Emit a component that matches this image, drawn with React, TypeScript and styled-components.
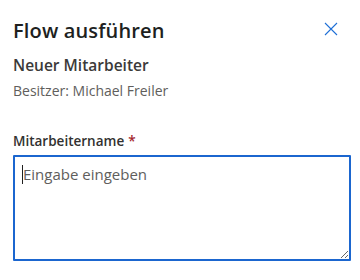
import React from "react";
import styled, { createGlobalStyle } from "styled-components";

const GlobalStyle = createGlobalStyle`
  html, body {
    margin: 0;
    padding: 0;
    background: #ffffff;
  }
  body {
    font-family: "Segoe UI", "Open Sans", "Noto Sans", sans-serif;
    color: #323130;
  }
`;

const Panel = styled.div`
  width: 360px;
  height: 280px;
  box-sizing: border-box;
  padding: 17px 10px 0 13px;
  display: flex;
  flex-direction: column;
  overflow: hidden;
`;

const Header = styled.div`
  display: flex;
  align-items: flex-start;
  justify-content: space-between;
`;

const Title = styled.h1`
  margin: 0;
  font-size: 20px;
  font-weight: 600;
  line-height: 28px;
  color: #201f1e;
  letter-spacing: 0.15px;
`;

const CloseButton = styled.button`
  border: none;
  background: transparent;
  padding: 0;
  margin: 4px 11px 0 0;
  width: 16px;
  height: 16px;
  display: flex;
  align-items: center;
  justify-content: center;
  cursor: pointer;
`;

const FlowName = styled.div`
  margin-top: 9px;
  font-size: 15.5px;
  font-weight: 600;
  line-height: 22px;
  color: #3b3a39;
`;

const Owner = styled.div`
  margin-top: 5px;
  font-size: 14px;
  line-height: 20px;
  color: #605e5c;
`;

const Field = styled.div`
  margin-top: 30px;
  display: flex;
  flex-direction: column;
`;

const Label = styled.label`
  font-size: 13.5px;
  font-weight: 600;
  line-height: 20px;
  color: #323130;

  span {
    color: #a4262c;
    padding-left: 4px;
  }
`;

const InputWrap = styled.div`
  position: relative;
  margin-top: 4px;
  width: 338px;
`;

const TextArea = styled.textarea`
  display: block;
  box-sizing: border-box;
  width: 338px;
  height: 106px;
  margin: 0;
  padding: 6px 8px;
  border: 2px solid #1b66cf;
  border-radius: 1px;
  outline: none;
  font-family: "Segoe UI", "Open Sans", "Noto Sans", sans-serif;
  font-size: 15px;
  line-height: 22px;
  color: #323130;
  resize: both;

  &::placeholder {
    color: #605e5c;
  }
`;

const Caret = styled.span`
  position: absolute;
  left: 9px;
  top: 10px;
  width: 1px;
  height: 19px;
  background: #201f1e;
`;

export default function App() {
  return (
    <>
      <GlobalStyle />
      <Panel>
        <Header>
          <Title>Flow ausführen</Title>
          <CloseButton aria-label="Schließen">
            <svg width="14" height="14" viewBox="0 0 14 14">
              <path
                d="M1 1 L13 13 M13 1 L1 13"
                stroke="#1f6fd6"
                strokeWidth="1.1"
                fill="none"
              />
            </svg>
          </CloseButton>
        </Header>
        <FlowName>Neuer Mitarbeiter</FlowName>
        <Owner>Besitzer: Michael Freiler</Owner>
        <Field>
          <Label htmlFor="name">
            Mitarbeitername<span>*</span>
          </Label>
          <InputWrap>
            <TextArea id="name" placeholder="Eingabe eingeben" />
            <Caret />
          </InputWrap>
        </Field>
      </Panel>
    </>
  );
}
